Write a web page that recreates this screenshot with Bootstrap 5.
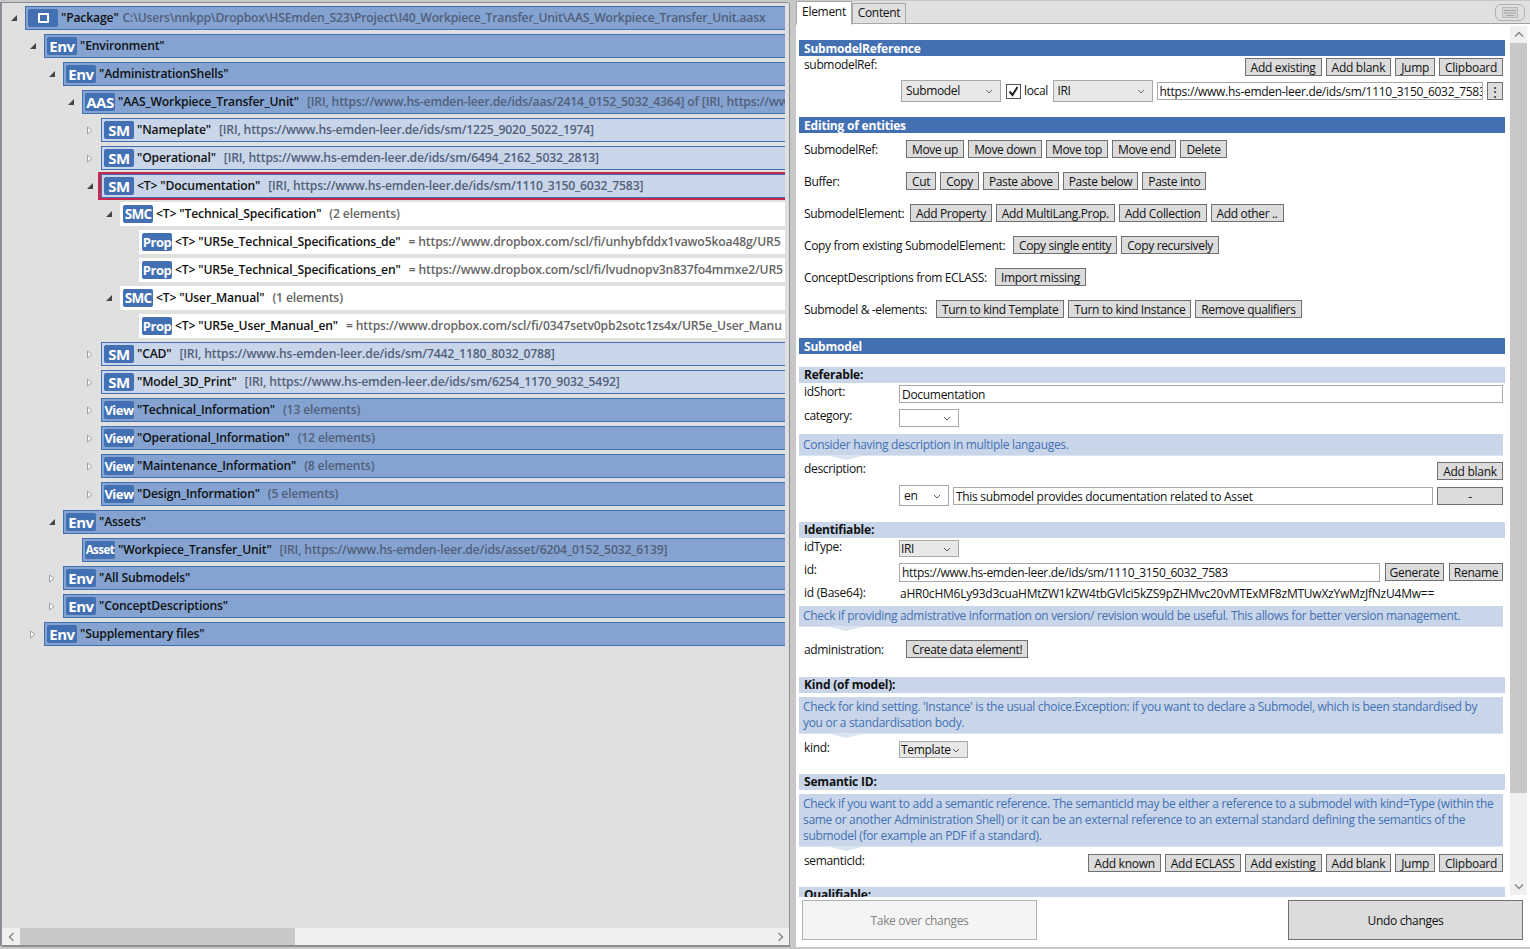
<!DOCTYPE html>
<html lang="en">
<head>
  <meta charset="UTF-8" />
  <title>AASX Package Explorer</title>
  <link href="https://cdn.jsdelivr.net/npm/bootstrap@5.3.3/dist/css/bootstrap.min.css" rel="stylesheet">
  <style>
    :root { --aas-blue: #4370b3; --aas-mid: #84a3d1; --aas-light: #c9d6ea; --aas-grey: #e0e0e0; }
    html, body { height: 100%; overflow: hidden; }
    body { font-family: "Open Sans", "Liberation Sans", sans-serif; font-size: 12px; line-height: 16px; letter-spacing: -.35px; color: #111; background: #c8c8c8; }
    .app-shell { width: 1530px; height: 949px; padding: 3px 0 2px 2px; }

    /* left tree */
    .tree-pane { width: 788px; background: var(--aas-grey); border-right: 1px solid #8a8f96; border-bottom: 2px solid #8a8f96; box-shadow: -2px -1px 0 #8a8f96; }
    .tree-list { padding-top: 3px; padding-right: 4px; overflow: hidden; }
    .tree-row { height: 24px; margin-bottom: 4px; white-space: nowrap; }
    .lv0 { padding-left: 5px; } .lv1 { padding-left: 24px; } .lv2 { padding-left: 43px; }
    .lv3 { padding-left: 62px; } .lv4 { padding-left: 81px; } .lv5 { padding-left: 100px; } .lv6 { padding-left: 119px; }
    .twist { width: 18px; flex: none; display: flex; align-items: center; justify-content: center; padding-right: 5px; }
    .twist svg { display: block; }
    .tree-box { flex: 1; min-width: 0; height: 24px; overflow: hidden; font-weight: 600; font-size: 12.2px; line-height: 20px; letter-spacing: -.17px; }
    .box-dark { background: var(--aas-mid); border: 1px solid var(--aas-blue); border-right: 0; padding: 1px 0 1px 1px; }
    .box-light { background: var(--aas-light); border: 1px solid var(--aas-blue); border-right: 0; padding: 1px 0 1px 1px; }
    .box-white { background: #fff; padding: 2px 0 2px 2px; }
    .box-sel { box-shadow: -1px 0 0 2px #c8274d; clip-path: inset(-2px 0 -2px -3px); overflow: visible; }
    .node-tag { width: 30px; height: 18px; flex: none; background: var(--aas-blue); color: #fff; border-radius: 2px; font-weight: 700; text-align: center; font-size: 15px; line-height: 18px; letter-spacing: -.5px; margin: 1px 3px 1px 1px; overflow: hidden; }
    .tag-m { font-size: 13.5px; letter-spacing: -.7px; }
    .tag-s { font-size: 13px; }
    .tag-xs { font-size: 11.5px; }
    .tag-pkg span { display: block; width: 11px; height: 10px; border: 2px solid #fff; border-radius: 1px; margin: 4px auto 0; }
    .tree-sub { color: #52607a; margin-left: 8px; }
    .sub-path { margin-left: 4px; letter-spacing: -.22px; }
    .sub-grey { color: #666; }
    .hscroll { height: 17px; background: #f0f0f0; padding-left: 1px; }
    .hscroll-btn { width: 17px; color: #8a8a8a; }
    .hscroll-thumb { width: 275px; background: #c8c8c8; }

    /* right side */
    .split-bar { width: 6px; background: #c8c8c8; }
    .edit-pane { width: 734px; background: #fff; }
    .tab-strip { height: 23px; background: var(--aas-grey); border-bottom: 1px solid #a0a0a0; margin-top: -2px; }
    .tab-item { width: 54px; height: 21px; border: 1px solid #a8a8a8; background: var(--aas-grey); margin-top: 2px; margin-bottom: -1px; line-height: 18px; text-align: center; letter-spacing: -.3px; }
    .tab-on { width: 56px; background: #fff; border-bottom-color: #fff; margin-top: 0; height: 24px; line-height: 19px; }
    .kbd-btn { width: 30px; height: 17px; border: 1px solid #b0b0b0; border-radius: 6px; margin: 3px 5px 0 auto; }
    .edit-body { height: 873px; }
    .form-scroll { flex: 1; min-width: 0; overflow: hidden; padding: 16px 0 0 3px; }
    .vscroll { width: 17px; margin: 2px 3px 0 5px; height: 869px; background: #f0f0f0; color: #8a8a8a; }
    .vscroll-btn { height: 17px; }
    .vscroll-thumb { height: 750px; background: #c8c8c8; }

    .sec-head { height: 16px; line-height: 17px; background: var(--aas-blue); color: #fff; font-weight: 700; padding-left: 5px; letter-spacing: -.2px; }
    .sub-head { height: 16px; line-height: 16px; background: var(--aas-light); color: #111; font-weight: 700; padding-left: 5px; letter-spacing: -.2px; }
    .hint-box { background: var(--aas-light); color: var(--aas-blue); padding: 2px 4px 2px 4px; line-height: 16px; margin-right: 2px; position: relative; border-bottom: 1px solid #dbe4f1; letter-spacing: -.31px; }
    .hint-box::after { content: ""; position: absolute; left: 27px; top: 100%; border: solid transparent; border-width: 5px 20px 0; border-top-color: #dbe4f1; }
    .form-row { display: flex; padding: 0 2px 0 5px; }
    .row-lbl { flex: none; white-space: nowrap; margin-top: -1px; }
    .lbl-95 { width: 95px; }
    .lbl-96 { width: 96px; }
    .lbl-102 { width: 102px; }
    .lbl-106 { width: 106px; }
    .lbl-132 { width: 132px; }
    .lbl-191 { width: 191px; }
    .lbl-209 { width: 209px; }

    .ui-btn { height: 18px; flex: none; padding: 1px 5px 0; margin: 0; font-size: 12px; line-height: 15px; letter-spacing: -.28px; color: #111; background: #dcdcdc; border: 1px solid #707070; border-radius: 0; white-space: nowrap; text-align: center; }
    .ui-input { height: 18px; padding: 1px 2px 0; font-size: 12px; line-height: 16px; letter-spacing: -.3px; border: 1px solid #a8a8a8; color: #111; background: #fff; min-width: 0; white-space: nowrap; overflow: hidden; }
    .ui-select { height: 18px; position: relative; flex: none; border: 1px solid #a8a8a8; background: #fff; padding: 0 2px; line-height: 16px; }
    .sel-grey { background: #e8e8e8; padding-left: 4px; height: 22px; line-height: 20px; }
    .ui-select svg { position: absolute; right: 7px; top: 50%; margin-top: -2px; }
    .w-100px { width: 100px; } .w-60px { width: 60px; } .w-50px { width: 50px; } .w-69px { width: 69px; } .w-66px { width: 66px; }
    .w-54px { width: 54px; padding-left: 0; padding-right: 0; } .w-59px { width: 59px; padding-left: 0; padding-right: 0; }
    .check-box { width: 15px; height: 15px; flex: none; border: 1px solid #555; background: #fff; }

    .big-btn { width: 235px; height: 40px; flex: none; font-size: 12px; letter-spacing: -.33px; border: 1px solid #707070; background: #dcdcdc; color: #111; border-radius: 0; padding: 2px 0 0; }
    .big-btn:disabled { background: #f4f4f4; border-color: #adb2b5; color: #838383; opacity: 1; }
    .foot-bar { padding: 3px 7px 0 6px; }

    /* row spacing of the form */
    .gap-btn { gap: 4px; }
    .fr-top { margin-top: 2px; height: 18px; }
    .ref-row { margin-top: 4px; height: 22px; padding-left: 102px; }
    .ref-row .ui-select { margin-right: 5px; }
    .ref-row .ui-select.no-gap { margin-right: 0; }
    .local-lbl { margin: 0 3px; width: 26px; }
    .ref-row .ui-input { margin: 0 4px; }
    .dots-btn { width: 16px; padding: 0; }
    .mt-sec1 { margin-top: 15px; }
    .act-row { height: 18px; margin-top: 14px; align-items: center; }
    .act-row .row-lbl { margin-top: 1px; }
    .act-row .ui-btn { letter-spacing: -.35px; }
    .act-row.first { margin-top: 7px; }
    .mt-sec2 { margin-top: 20px; }
    .mt-sub1 { margin-top: 13px; }
    .rw-idshort { margin-top: 2px; height: 18px; }
    .rw-cat { margin-top: 6px; height: 18px; }
    .mt-hint1 { margin-top: 7px; height: 22px; padding-top: 3px; }
    .rw-desc { margin-top: 6px; height: 18px; }
    .rw-lang { margin-top: 5px; height: 21px; }
    .sel-tall { height: 21px; line-height: 19px; padding-left: 4px; margin-right: 4px; }
    .lang-input { margin-right: 4px; }
    .mt-sub2 { margin-top: 16px; }
    .rw-idtype { margin-top: 2px; height: 17px; }
    .sel-g2 { height: 17px; background: #e8e8e8; line-height: 15px; padding-left: 1px; }
    .rw-id { margin-top: 6px; height: 19px; gap: 5px; }
    .rw-id .row-lbl { margin-right: -5px; }
    .rw-id .id-input { height: 19px; }
    .rw-b64 { margin-top: 4px; height: 16px; letter-spacing: -.23px; }
    .mt-hint2 { margin-top: 4px; height: 21px; padding-top: 2px; }
    .rw-admin { margin-top: 13px; height: 18px; }
    .mt-sub3 { margin-top: 19px; }
    .mt-hint3 { margin-top: 4px; }
    .rw-kind { margin-top: 7px; height: 16px; }
    .mt-sub4 { margin-top: 17px; }
    .rw-sem { margin-top: 7px; height: 18px; }
    .mt-sub5 { margin-top: 15px; }
  </style>
</head>
<body>
  <div class="app-shell d-flex">

    <div class="tree-pane d-flex flex-column">
      <div class="tree-list flex-grow-1">
        <div class="tree-row d-flex lv0"><span class="twist"><svg width="8" height="8"><path d="M7 1V7H1Z" fill="#444"/></svg></span><div class="tree-box box-dark d-flex"><span class="node-tag tag-pkg"><span></span></span><span>"Package"</span><span class="tree-sub sub-path">C:\Users\nnkpp\Dropbox\HSEmden_S23\Project\I40_Workpiece_Transfer_Unit\AAS_Workpiece_Transfer_Unit.aasx</span></div></div>
        <div class="tree-row d-flex lv1"><span class="twist"><svg width="8" height="8"><path d="M7 1V7H1Z" fill="#444"/></svg></span><div class="tree-box box-dark d-flex"><span class="node-tag">Env</span><span>"Environment"</span></div></div>
        <div class="tree-row d-flex lv2"><span class="twist"><svg width="8" height="8"><path d="M7 1V7H1Z" fill="#444"/></svg></span><div class="tree-box box-dark d-flex"><span class="node-tag">Env</span><span>"AdministrationShells"</span></div></div>
        <div class="tree-row d-flex lv3"><span class="twist"><svg width="8" height="8"><path d="M7 1V7H1Z" fill="#444"/></svg></span><div class="tree-box box-dark d-flex"><span class="node-tag">AAS</span><span>"AAS_Workpiece_Transfer_Unit"</span><span class="tree-sub">[IRI, https://www.hs-emden-leer.de/ids/aas/2414_0152_5032_4364] of [IRI, https://ww</span></div></div>
        <div class="tree-row d-flex lv4"><span class="twist"><svg width="7" height="9"><path d="M1.5 1V8L6 4.5Z" fill="#fff" stroke="#a0a0a0"/></svg></span><div class="tree-box box-light d-flex"><span class="node-tag">SM</span><span>"Nameplate"</span><span class="tree-sub">[IRI, https://www.hs-emden-leer.de/ids/sm/1225_9020_5022_1974]</span></div></div>
        <div class="tree-row d-flex lv4"><span class="twist"><svg width="7" height="9"><path d="M1.5 1V8L6 4.5Z" fill="#fff" stroke="#a0a0a0"/></svg></span><div class="tree-box box-light d-flex"><span class="node-tag">SM</span><span>"Operational"</span><span class="tree-sub">[IRI, https://www.hs-emden-leer.de/ids/sm/6494_2162_5032_2813]</span></div></div>
        <div class="tree-row d-flex lv4"><span class="twist"><svg width="8" height="8"><path d="M7 1V7H1Z" fill="#444"/></svg></span><div class="tree-box box-light box-sel d-flex"><span class="node-tag">SM</span><span>&lt;T&gt; "Documentation"</span><span class="tree-sub">[IRI, https://www.hs-emden-leer.de/ids/sm/1110_3150_6032_7583]</span></div></div>
        <div class="tree-row d-flex lv5"><span class="twist"><svg width="8" height="8"><path d="M7 1V7H1Z" fill="#444"/></svg></span><div class="tree-box box-white d-flex"><span class="node-tag tag-m">SMC</span><span>&lt;T&gt; "Technical_Specification"</span><span class="tree-sub sub-grey">(2 elements)</span></div></div>
        <div class="tree-row d-flex lv6"><span class="twist"></span><div class="tree-box box-white d-flex"><span class="node-tag tag-s">Prop</span><span>&lt;T&gt; "UR5e_Technical_Specifications_de"</span><span class="tree-sub sub-grey">= https://www.dropbox.com/scl/fi/unhybfddx1vawo5koa48g/UR5</span></div></div>
        <div class="tree-row d-flex lv6"><span class="twist"></span><div class="tree-box box-white d-flex"><span class="node-tag tag-s">Prop</span><span>&lt;T&gt; "UR5e_Technical_Specifications_en"</span><span class="tree-sub sub-grey">= https://www.dropbox.com/scl/fi/lvudnopv3n837fo4mmxe2/UR5</span></div></div>
        <div class="tree-row d-flex lv5"><span class="twist"><svg width="8" height="8"><path d="M7 1V7H1Z" fill="#444"/></svg></span><div class="tree-box box-white d-flex"><span class="node-tag tag-m">SMC</span><span>&lt;T&gt; "User_Manual"</span><span class="tree-sub sub-grey">(1 elements)</span></div></div>
        <div class="tree-row d-flex lv6"><span class="twist"></span><div class="tree-box box-white d-flex"><span class="node-tag tag-s">Prop</span><span>&lt;T&gt; "UR5e_User_Manual_en"</span><span class="tree-sub sub-grey">= https://www.dropbox.com/scl/fi/0347setv0pb2sotc1zs4x/UR5e_User_Manu</span></div></div>
        <div class="tree-row d-flex lv4"><span class="twist"><svg width="7" height="9"><path d="M1.5 1V8L6 4.5Z" fill="#fff" stroke="#a0a0a0"/></svg></span><div class="tree-box box-light d-flex"><span class="node-tag">SM</span><span>"CAD"</span><span class="tree-sub">[IRI, https://www.hs-emden-leer.de/ids/sm/7442_1180_8032_0788]</span></div></div>
        <div class="tree-row d-flex lv4"><span class="twist"><svg width="7" height="9"><path d="M1.5 1V8L6 4.5Z" fill="#fff" stroke="#a0a0a0"/></svg></span><div class="tree-box box-light d-flex"><span class="node-tag">SM</span><span>"Model_3D_Print"</span><span class="tree-sub">[IRI, https://www.hs-emden-leer.de/ids/sm/6254_1170_9032_5492]</span></div></div>
        <div class="tree-row d-flex lv4"><span class="twist"><svg width="7" height="9"><path d="M1.5 1V8L6 4.5Z" fill="#fff" stroke="#a0a0a0"/></svg></span><div class="tree-box box-dark d-flex"><span class="node-tag tag-s">View</span><span>"Technical_Information"</span><span class="tree-sub">(13 elements)</span></div></div>
        <div class="tree-row d-flex lv4"><span class="twist"><svg width="7" height="9"><path d="M1.5 1V8L6 4.5Z" fill="#fff" stroke="#a0a0a0"/></svg></span><div class="tree-box box-dark d-flex"><span class="node-tag tag-s">View</span><span>"Operational_Information"</span><span class="tree-sub">(12 elements)</span></div></div>
        <div class="tree-row d-flex lv4"><span class="twist"><svg width="7" height="9"><path d="M1.5 1V8L6 4.5Z" fill="#fff" stroke="#a0a0a0"/></svg></span><div class="tree-box box-dark d-flex"><span class="node-tag tag-s">View</span><span>"Maintenance_Information"</span><span class="tree-sub">(8 elements)</span></div></div>
        <div class="tree-row d-flex lv4"><span class="twist"><svg width="7" height="9"><path d="M1.5 1V8L6 4.5Z" fill="#fff" stroke="#a0a0a0"/></svg></span><div class="tree-box box-dark d-flex"><span class="node-tag tag-s">View</span><span>"Design_Information"</span><span class="tree-sub">(5 elements)</span></div></div>
        <div class="tree-row d-flex lv2"><span class="twist"><svg width="8" height="8"><path d="M7 1V7H1Z" fill="#444"/></svg></span><div class="tree-box box-dark d-flex"><span class="node-tag">Env</span><span>"Assets"</span></div></div>
        <div class="tree-row d-flex lv3"><span class="twist"></span><div class="tree-box box-dark d-flex"><span class="node-tag tag-xs">Asset</span><span>"Workpiece_Transfer_Unit"</span><span class="tree-sub">[IRI, https://www.hs-emden-leer.de/ids/asset/6204_0152_5032_6139]</span></div></div>
        <div class="tree-row d-flex lv2"><span class="twist"><svg width="7" height="9"><path d="M1.5 1V8L6 4.5Z" fill="#fff" stroke="#a0a0a0"/></svg></span><div class="tree-box box-dark d-flex"><span class="node-tag">Env</span><span>"All Submodels"</span></div></div>
        <div class="tree-row d-flex lv2"><span class="twist"><svg width="7" height="9"><path d="M1.5 1V8L6 4.5Z" fill="#fff" stroke="#a0a0a0"/></svg></span><div class="tree-box box-dark d-flex"><span class="node-tag">Env</span><span>"ConceptDescriptions"</span></div></div>
        <div class="tree-row d-flex lv1"><span class="twist"><svg width="7" height="9"><path d="M1.5 1V8L6 4.5Z" fill="#fff" stroke="#a0a0a0"/></svg></span><div class="tree-box box-dark d-flex"><span class="node-tag">Env</span><span>"Supplementary files"</span></div></div>
      </div>
      <div class="hscroll d-flex">
        <span class="hscroll-btn d-flex align-items-center justify-content-center"><svg width="7" height="10"><path d="M5.5 1L1.5 5l4 4" fill="none" stroke="currentColor" stroke-width="1.5"/></svg></span>
        <span class="hscroll-thumb"></span>
        <span class="hscroll-btn d-flex align-items-center justify-content-center ms-auto"><svg width="7" height="10"><path d="M1.5 1l4 4-4 4" fill="none" stroke="currentColor" stroke-width="1.5"/></svg></span>
      </div>
    </div>

    <div class="split-bar"></div>

    <div class="edit-pane d-flex flex-column">
      <div class="tab-strip d-flex align-items-start">
        <div class="tab-item tab-on">Element</div>
        <div class="tab-item">Content</div>
        <div class="kbd-btn d-flex align-items-center justify-content-center"><svg width="16" height="11"><rect x=".5" y=".5" width="15" height="10" fill="#d4d4d4" stroke="#b8b8b8"/><path d="M2 3.5h12M2 6h12M4 8.5h8" stroke="#a4a4a4"/></svg></div>
      </div>

      <div class="edit-body d-flex">
        <div class="form-scroll">
          <div class="sec-head">SubmodelReference</div>
          <div class="form-row fr-top">
            <span class="row-lbl">submodelRef:</span>
            <div class="d-flex ms-auto gap-btn">
              <button class="ui-btn">Add existing</button><button class="ui-btn">Add blank</button><button class="ui-btn">Jump</button><button class="ui-btn">Clipboard</button>
            </div>
          </div>
          <div class="form-row ref-row align-items-center">
            <div class="ui-select sel-grey w-100px">Submodel<svg width="8" height="5"><path d="M1 1l3 3 3-3" fill="none" stroke="#666"/></svg></div>
            <span class="check-box d-flex align-items-center justify-content-center"><svg width="11" height="11"><path d="M1.5 5.5l3 3.5 5-8" fill="none" stroke="#222" stroke-width="2"/></svg></span>
            <span class="local-lbl">local</span>
            <div class="ui-select sel-grey no-gap w-100px">IRI<svg width="8" height="5"><path d="M1 1l3 3 3-3" fill="none" stroke="#666"/></svg></div>
            <div class="ui-input flex-grow-1">https://www.hs-emden-leer.de/ids/sm/1110_3150_6032_7583</div>
            <button class="ui-btn dots-btn">⋮</button>
          </div>

          <div class="sec-head mt-sec1">Editing of entities</div>
          <div class="form-row act-row first"><span class="row-lbl lbl-102">SubmodelRef:</span><div class="d-flex gap-btn"><button class="ui-btn">Move up</button><button class="ui-btn">Move down</button><button class="ui-btn">Move top</button><button class="ui-btn">Move end</button><button class="ui-btn">Delete</button></div></div>
          <div class="form-row act-row"><span class="row-lbl lbl-102">Buffer:</span><div class="d-flex gap-btn"><button class="ui-btn">Cut</button><button class="ui-btn">Copy</button><button class="ui-btn">Paste above</button><button class="ui-btn">Paste below</button><button class="ui-btn">Paste into</button></div></div>
          <div class="form-row act-row"><span class="row-lbl lbl-106">SubmodelElement:</span><div class="d-flex gap-btn"><button class="ui-btn">Add Property</button><button class="ui-btn">Add MultiLang.Prop.</button><button class="ui-btn">Add Collection</button><button class="ui-btn">Add other ..</button></div></div>
          <div class="form-row act-row"><span class="row-lbl lbl-209">Copy from existing SubmodelElement:</span><div class="d-flex gap-btn"><button class="ui-btn">Copy single entity</button><button class="ui-btn">Copy recursively</button></div></div>
          <div class="form-row act-row"><span class="row-lbl lbl-191">ConceptDescriptions from ECLASS:</span><div class="d-flex gap-btn"><button class="ui-btn">Import missing</button></div></div>
          <div class="form-row act-row"><span class="row-lbl lbl-132">Submodel &amp; -elements:</span><div class="d-flex gap-btn"><button class="ui-btn">Turn to kind Template</button><button class="ui-btn">Turn to kind Instance</button><button class="ui-btn">Remove qualifiers</button></div></div>

          <div class="sec-head mt-sec2">Submodel</div>
          <div class="sub-head mt-sub1">Referable:</div>
          <div class="form-row rw-idshort"><span class="row-lbl lbl-95">idShort:</span><div class="ui-input flex-grow-1">Documentation</div></div>
          <div class="form-row rw-cat"><span class="row-lbl lbl-95">category:</span><div class="ui-select w-60px"><svg width="8" height="5"><path d="M1 1l3 3 3-3" fill="none" stroke="#555"/></svg></div></div>
          <div class="hint-box mt-hint1">Consider having description in multiple langauges.</div>
          <div class="form-row rw-desc"><span class="row-lbl">description:</span><button class="ui-btn ms-auto w-66px">Add blank</button></div>
          <div class="form-row rw-lang align-items-center">
            <span class="row-lbl lbl-95"></span>
            <div class="ui-select sel-tall w-50px">en<svg width="8" height="5"><path d="M1 1l3 3 3-3" fill="none" stroke="#555"/></svg></div>
            <div class="ui-input flex-grow-1 lang-input">This submodel provides documentation related to Asset</div>
            <button class="ui-btn w-66px">-</button>
          </div>

          <div class="sub-head mt-sub2">Identifiable:</div>
          <div class="form-row rw-idtype"><span class="row-lbl lbl-95">idType:</span><div class="ui-select sel-g2 w-60px">IRI<svg width="8" height="5"><path d="M1 1l3 3 3-3" fill="none" stroke="#555"/></svg></div></div>
          <div class="form-row rw-id"><span class="row-lbl lbl-95">id:</span><div class="ui-input flex-grow-1 id-input">https://www.hs-emden-leer.de/ids/sm/1110_3150_6032_7583</div><button class="ui-btn w-59px">Generate</button><button class="ui-btn w-54px">Rename</button></div>
          <div class="form-row rw-b64"><span class="row-lbl lbl-96">id (Base64):</span><span>aHR0cHM6Ly93d3cuaHMtZW1kZW4tbGVlci5kZS9pZHMvc20vMTExMF8zMTUwXzYwMzJfNzU4Mw==</span></div>
          <div class="hint-box mt-hint2">Check if providing admistrative information on version/ revision would be useful. This allows for better version management.</div>
          <div class="form-row rw-admin act-row"><span class="row-lbl lbl-102">administration:</span><button class="ui-btn">Create data element!</button></div>

          <div class="sub-head mt-sub3">Kind (of model):</div>
          <div class="hint-box mt-hint3">Check for kind setting. 'Instance' is the usual choice.Exception: if you want to declare a Submodel, which is been standardised by you or a standardisation body.</div>
          <div class="form-row rw-kind"><span class="row-lbl lbl-95">kind:</span><div class="ui-select sel-g2 w-69px">Template<svg width="8" height="5"><path d="M1 1l3 3 3-3" fill="none" stroke="#555"/></svg></div></div>

          <div class="sub-head mt-sub4">Semantic ID:</div>
          <div class="hint-box mt-hint3">Check if you want to add a semantic reference. The semanticId may be either a reference to a submodel with kind=Type (within the same or another Administration Shell) or it can be an external reference to an external standard defining the semantics of the submodel (for example an PDF if a standard).</div>
          <div class="form-row rw-sem"><span class="row-lbl">semanticId:</span><div class="d-flex ms-auto gap-btn"><button class="ui-btn">Add known</button><button class="ui-btn">Add ECLASS</button><button class="ui-btn">Add existing</button><button class="ui-btn">Add blank</button><button class="ui-btn">Jump</button><button class="ui-btn">Clipboard</button></div></div>
          <div class="sub-head mt-sub5">Qualifiable:</div>
        </div>
        <div class="vscroll d-flex flex-column">
          <div class="vscroll-btn d-flex align-items-center justify-content-center"><svg width="10" height="7"><path d="M1 5.5l4-4 4 4" fill="none" stroke="currentColor" stroke-width="1.5"/></svg></div>
          <div class="vscroll-thumb"></div>
          <div class="vscroll-btn d-flex align-items-center justify-content-center mt-auto"><svg width="10" height="7"><path d="M1 1.5l4 4 4-4" fill="none" stroke="currentColor" stroke-width="1.5"/></svg></div>
        </div>
      </div>

      <div class="foot-bar d-flex justify-content-between">
        <button class="big-btn" disabled>Take over changes</button>
        <button class="big-btn">Undo changes</button>
      </div>
    </div>
  </div>
</body>
</html>
